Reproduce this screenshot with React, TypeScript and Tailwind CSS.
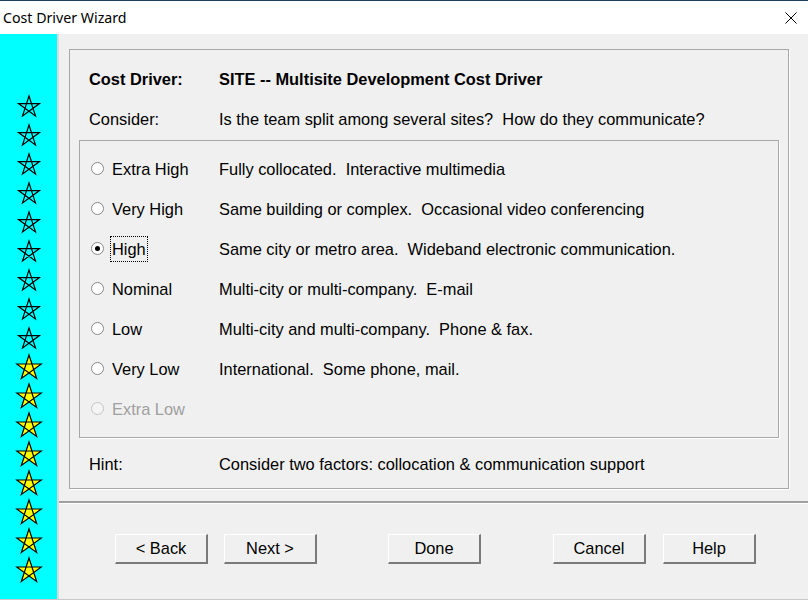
import React from 'react'

const levels = [
  { label: 'Extra High', desc: 'Fully collocated.  Interactive multimedia' },
  { label: 'Very High', desc: 'Same building or complex.  Occasional video conferencing' },
  { label: 'High', desc: 'Same city or metro area.  Wideband electronic communication.', checked: true },
  { label: 'Nominal', desc: 'Multi-city or multi-company.  E-mail' },
  { label: 'Low', desc: 'Multi-city and multi-company.  Phone & fax.' },
  { label: 'Very Low', desc: 'International.  Some phone, mail.' },
  { label: 'Extra Low', desc: '', disabled: true },
]

// pentagram: points taken in star order so the inner lines show
function Star({ filled }: { filled: boolean }) {
  const size = filled ? 28 : 24
  const r = size / 2 - 1
  const c = size / 2
  const pts = [0, 2, 4, 1, 3].map((i) => {
    const a = (-90 + i * 72) * (Math.PI / 180)
    return `${(c + r * Math.cos(a)).toFixed(2)},${(c + 1 + r * Math.sin(a)).toFixed(2)}`
  })
  return (
    <svg width={size} height={size} viewBox={`0 0 ${size} ${size}`}>
      <polygon
        points={pts.join(' ')}
        fill={filled ? '#ffff00' : 'none'}
        fillRule="nonzero"
        stroke="#000"
        strokeWidth={1.2}
        strokeLinejoin="miter"
      />
    </svg>
  )
}

function Radio({ checked, disabled }: { checked?: boolean; disabled?: boolean }) {
  return (
    <span
      className={`w-[13px] h-[13px] rounded-full border flex items-center justify-center flex-shrink-0 ${
        disabled ? 'border-[#c4c4c4] bg-[#f4f4f4]' : 'border-[#8a8a8a] bg-white'
      }`}
    >
      {checked && <span className="w-[5px] h-[5px] rounded-full bg-black" />}
    </span>
  )
}

function Btn({ children, className = '' }: { children: React.ReactNode; className?: string }) {
  return (
    <button
      className={`w-[93px] h-[30px] bg-[#f0f0f0] border-t border-l border-t-white border-l-white border-b-2 border-r-2 border-b-[#7a7a7a] border-r-[#7a7a7a] text-[16.4px] text-black ${className}`}
    >
      {children}
    </button>
  )
}

export default function App() {
  return (
    <div
      className="w-[808px] h-[600px] flex flex-col bg-[#f0f0f0] overflow-hidden border-t border-[#1f3d5c]"
      style={{ fontFamily: '"Liberation Sans", Arial, sans-serif' }}
    >
      {/* Title bar */}
      <div className="h-[33px] bg-white flex items-center pl-[3px] pr-[11px] flex-shrink-0">
        <span className="text-[14.2px] text-black" style={{ fontFamily: '"Noto Sans", sans-serif' }}>
          Cost Driver Wizard
        </span>
        <svg className="ml-auto" width="12" height="12" viewBox="0 0 12 12">
          <path d="M0.5 0.5 L11.5 11.5 M11.5 0.5 L0.5 11.5" stroke="#000" strokeWidth="1" />
        </svg>
      </div>

      <div className="flex flex-1 min-h-0 border-b border-[#c8c8c8]">
        {/* Star strip */}
        <aside className="w-[59px] bg-[#00ffff] border-r-2 border-[#d9d9d9] flex flex-col items-center pt-[57px] flex-shrink-0">
          {Array.from({ length: 17 }).map((_, i) => (
            <div key={i} className="h-[29px] flex items-center justify-center">
              <Star filled={i >= 9} />
            </div>
          ))}
        </aside>

        {/* Main */}
        <div className="flex-1 flex flex-col">
          <div className="pt-[15px] pl-[10px] pr-[19px] h-[467px]">
            <div className="border border-[#a8a8a8] shadow-[1px_1px_0_#fff] px-[9px] pb-[4px] pt-[9px] text-[16.4px] text-black">
              <div className="h-[40px] flex items-center font-bold pl-[10px]">
                <span className="w-[130px]">Cost Driver:</span>
                <span>SITE -- Multisite Development Cost Driver</span>
              </div>
              <div className="h-[40px] flex items-center pl-[10px]">
                <span className="w-[130px]">Consider:</span>
                <span className="whitespace-pre">Is the team split among several sites?  How do they communicate?</span>
              </div>

              <div className="mt-[1px] border border-[#a8a8a8] shadow-[1px_1px_0_#fff] pt-[8px] pb-[8px] pl-[11px]">
                {levels.map((l) => (
                  <div key={l.label} className="h-[40px] flex items-center">
                    <div className="w-[128px] flex items-center gap-[8px]">
                      <Radio checked={l.checked} disabled={l.disabled} />
                      <span
                        className={`${l.disabled ? 'text-[#a0a0a0]' : ''} ${
                          l.checked ? 'outline outline-1 outline-dotted outline-black outline-offset-0 px-[1px] -ml-[1px]' : ''
                        }`}
                      >
                        {l.label}
                      </span>
                    </div>
                    <span className="whitespace-pre">{l.desc}</span>
                  </div>
                ))}
              </div>

              <div className="mt-[6px] h-[40px] flex items-center pl-[10px]">
                <span className="w-[130px]">Hint:</span>
                <span>Consider two factors: collocation &amp; communication support</span>
              </div>
            </div>
          </div>

          <div className="border-t-2 border-[#a0a0a0] border-b border-b-white" />

          <div className="flex-1 flex items-start pt-[30px] pl-[56px]">
            <Btn>&lt; Back</Btn>
            <Btn className="ml-[16px]">Next &gt;</Btn>
            <Btn className="ml-[71px]">Done</Btn>
            <Btn className="ml-[72px]">Cancel</Btn>
            <Btn className="ml-[17px]">Help</Btn>
          </div>
        </div>
      </div>
    </div>
  )
}
